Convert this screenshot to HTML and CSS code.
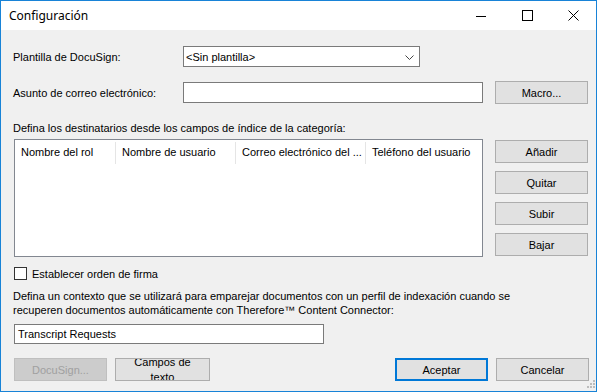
FILE: index.html
```html
<!DOCTYPE html>
<html lang="es">
<head>
<meta charset="utf-8">
<title>Configuración</title>
<link rel="stylesheet" href="styles.css">
</head>
<body>
<div class="window">
  <div class="titlebar">
    <div class="title">Configuración</div>
    <div class="controls">
      <div class="ctl"><svg width="10" height="10" viewBox="0 0 10 10"><path d="M0 5.5H10" stroke="#000" stroke-width="1"/></svg></div>
      <div class="ctl"><svg width="11" height="11" viewBox="0 0 11 11"><rect x="0.5" y="0.5" width="10" height="10" fill="none" stroke="#000" stroke-width="1"/></svg></div>
      <div class="ctl"><svg width="11" height="11" viewBox="0 0 11 11"><path d="M0.5 0.5L10.5 10.5M10.5 0.5L0.5 10.5" stroke="#000" stroke-width="1"/></svg></div>
    </div>
  </div>
  <div class="body">
    <div class="row row1">
      <div class="label">Plantilla de DocuSign:</div>
      <div class="combo">
        <span>&lt;Sin plantilla&gt;</span>
        <svg class="chev" width="9" height="5" viewBox="0 0 9 5"><path d="M0.5 0.5L4.5 4.5L8.5 0.5" fill="none" stroke="#444" stroke-width="1"/></svg>
      </div>
    </div>
    <div class="row row2">
      <div class="label">Asunto de correo electrónico:</div>
      <div class="input subject"></div>
      <div class="btn macro">Macro...</div>
    </div>
    <div class="caption">Defina los destinatarios desde los campos de índice de la categoría:</div>
    <div class="listrow">
      <div class="listbox">
        <div class="header">
          <div class="col c1">Nombre del rol</div>
          <div class="col c2">Nombre de usuario</div>
          <div class="col c3">Correo electrónico del ...</div>
          <div class="col c4">Teléfono del usuario</div>
        </div>
      </div>
      <div class="sidebtns">
        <div class="btn">Añadir</div>
        <div class="btn">Quitar</div>
        <div class="btn">Subir</div>
        <div class="btn">Bajar</div>
      </div>
    </div>
    <div class="checkrow">
      <div class="checkbox"></div>
      <div class="checklabel">Establecer orden de firma</div>
    </div>
    <div class="para">Defina un contexto que se utilizará para emparejar documentos con un perfil de indexación cuando se recuperen documentos automáticamente con Therefore™ Content Connector:</div>
    <div class="input context">Transcript Requests</div>
    <div class="bottom">
      <div class="btn disabled">DocuSign...</div>
      <div class="btn campos"><span>Campos de<br>texto</span></div>
      <div class="spacer"></div>
      <div class="btn primary">Aceptar</div>
      <div class="btn">Cancelar</div>
    </div>
    <svg class="grip" width="12" height="12" viewBox="0 0 12 12">
      <rect x="9" y="1" width="2" height="2" fill="#bcbcbc"/>
      <rect x="6" y="4" width="2" height="2" fill="#bcbcbc"/>
      <rect x="9" y="4" width="2" height="2" fill="#bcbcbc"/>
      <rect x="3" y="7" width="2" height="2" fill="#bcbcbc"/>
      <rect x="6" y="7" width="2" height="2" fill="#bcbcbc"/>
      <rect x="9" y="7" width="2" height="2" fill="#bcbcbc"/>
    </svg>
  </div>
</div>
</body>
</html>
```
FILE: styles.css
```css
html, body {
  margin: 0;
  padding: 0;
}
body {
  width: 597px;
  height: 392px;
  overflow: hidden;
  font-family: "Liberation Sans", Arial, sans-serif;
  font-size: 11px;
  color: #000;
}
.window {
  box-sizing: border-box;
  width: 597px;
  height: 392px;
  border: 1px solid #1883d7;
  display: flex;
  flex-direction: column;
  background: #f0f0f0;
}
.titlebar {
  height: 29px;
  background: #fff;
  display: flex;
  align-items: center;
  flex: none;
}
.title {
  font-family: "Noto Sans", "Open Sans", sans-serif;
  font-size: 12px;
  padding-left: 8px;
  flex: 1;
  padding-bottom: 1px;
}
.controls {
  display: flex;
  height: 29px;
}
.ctl {
  width: 46px;
  height: 29px;
  display: flex;
  align-items: center;
  justify-content: center;
}
.body {
  flex: 1;
  position: relative;
  padding: 0 7px 0 12px;
  display: flex;
  flex-direction: column;
}
.row {
  display: flex;
  align-items: center;
}
.row1 {
  margin-top: 16px;
  height: 21px;
}
.label {
  width: 170px;
  flex: none;
}
.combo {
  box-sizing: border-box;
  width: 237px;
  height: 21px;
  background: #fff;
  border: 1px solid #7a7a7a;
  display: flex;
  align-items: center;
  justify-content: space-between;
  padding: 0 5px 0 2px;
}
.chev {
  margin-top: 1px;
}
.row2 {
  margin-top: 14px;
  height: 23px;
}
.input {
  box-sizing: border-box;
  background: #fff;
  border: 1px solid #7a7a7a;
}
.subject {
  width: 300px;
  height: 21px;
}
.btn {
  box-sizing: border-box;
  width: 93px;
  height: 23px;
  background: #e1e1e1;
  border: 1px solid #adadad;
  display: flex;
  align-items: center;
  justify-content: center;
  flex: none;
}
.macro {
  margin-left: 12px;
}
.caption {
  margin-top: 17px;
  line-height: 14px;
  height: 14px;
}
.listrow {
  display: flex;
  margin-top: 4px;
  margin-left: 1px;
}
.listbox {
  box-sizing: border-box;
  width: 469px;
  height: 118px;
  background: #fff;
  border: 1px solid #828790;
}
.header {
  display: flex;
  height: 24px;
}
.col {
  box-sizing: border-box;
  height: 24px;
  line-height: 24px;
  padding-left: 6px;
  white-space: nowrap;
  overflow: hidden;
  position: relative;
}
.col::after {
  content: "";
  position: absolute;
  right: 0;
  top: 2px;
  bottom: 0;
  width: 1px;
  background: #e5e5e5;
}
.c1 { width: 101px; }
.c2 { width: 120px; }
.c3 { width: 130px; }
.c4 { width: 116px; }
.c4::after { display: none; }
.sidebtns {
  margin-left: 12px;
  margin-top: 1px;
  display: flex;
  flex-direction: column;
  gap: 8px;
}
.checkrow {
  display: flex;
  align-items: center;
  margin-top: 10px;
  margin-left: 1px;
  height: 13px;
}
.checkbox {
  box-sizing: border-box;
  width: 13px;
  height: 13px;
  background: #fff;
  border: 1px solid #333;
}
.checklabel {
  margin-left: 5px;
}
.para {
  margin-top: 9px;
  line-height: 14px;
  width: 510px;
}
.context {
  margin-top: 7px;
  margin-left: 1px;
  width: 310px;
  height: 20px;
  line-height: 18px;
  padding-left: 3px;
}
.bottom {
  display: flex;
  margin-top: 14px;
  margin-left: 1px;
  gap: 8px;
}
.disabled {
  background: #cccccc;
  border-color: #bfbfbf;
  color: #a0a0a0;
}
.campos {
  width: 95px;
  overflow: hidden;
  text-align: center;
  line-height: 15px;
}
.spacer {
  flex: 1;
}
.primary {
  border: 2px solid #0078d7;
}
.grip {
  position: absolute;
  right: 0;
  bottom: 0;
}
```
